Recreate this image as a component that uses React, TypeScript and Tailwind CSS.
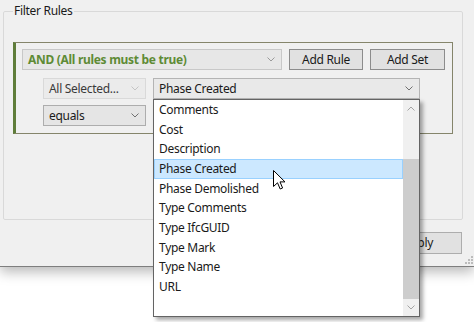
import React from 'react'

const items = [
  'Comments',
  'Cost',
  'Description',
  'Phase Created',
  'Phase Demolished',
  'Type Comments',
  'Type IfcGUID',
  'Type Mark',
  'Type Name',
  'URL',
]

function Chevron({ up = false, color = '#606060' }: { up?: boolean; color?: string }) {
  return (
    <svg width="8" height="5" viewBox="0 0 8 5" fill="none" aria-hidden>
      <polyline
        points={up ? '0.5,4.5 4,1 7.5,4.5' : '0.5,0.5 4,4 7.5,0.5'}
        stroke={color}
        strokeWidth="1"
      />
    </svg>
  )
}

export default function App() {
  return (
    <div
      className="relative w-[474px] h-[322px] overflow-hidden bg-white text-[12px] tracking-[-0.3px] text-[#1a1a1a]"
      style={{ fontFamily: '"Noto Sans", "Open Sans", sans-serif' }}
    >
      {/* Dialog window */}
      <div className="h-[267px] bg-[#f0f0f0] border-b border-[#7e7e7e] shadow-[0_5px_12px_rgba(0,0,0,0.28)] flex flex-col px-[3px] pt-[4px]">
        <fieldset className="w-[460px] h-[216px] border border-[#d9d9d9] rounded-[2px] px-[8px]">
          <legend className="ml-[1px] px-[1px] leading-[14px]">Filter Rules</legend>

          {/* Rule set */}
          <div className="mt-[24px] ml-[1px] w-[440px] h-[92px] border border-[#85856b] border-l-[3px] border-l-[#5f7d3a] flex flex-col pl-[6px] pt-[6px]">
            <div className="flex gap-[7px]">
              <div className="w-[260px] h-[21px] bg-[#e7e7e7] border border-[#c8c8c8] flex items-center justify-between pl-[5px] pr-[6px]">
                <span className="font-bold text-[#5e8b35]">AND (All rules must be true)</span>
                <Chevron color="#9a9a9a" />
              </div>
              <button className="w-[74px] h-[21px] bg-[#e1e1e1] border border-[#8c8c8c] flex items-center justify-center">
                Add Rule
              </button>
              <button className="w-[75px] h-[21px] bg-[#e1e1e1] border border-[#8c8c8c] flex items-center justify-center">
                Add Set
              </button>
            </div>

            <div className="flex gap-[7px] mt-[8px] pl-[21px]">
              <div className="w-[103px] h-[21px] bg-[#ebebeb] border border-[#d9d9d9] flex items-center justify-between pl-[5px] pr-[6px] text-[#3a3a3a]">
                <span>All Selected...</span>
                <Chevron color="#c4c4c4" />
              </div>
              <div className="relative z-10">
                <div className="w-[267px] h-[21px] bg-[#e9e9e9] border border-[#b4b4b4] flex items-center justify-between pl-[5px] pr-[6px]">
                  <span>Phase Created</span>
                  <Chevron color="#707070" />
                </div>

                {/* Open list */}
                <div className="absolute left-0 top-[21px] w-[267px] h-[218px] bg-white border border-[#646464] shadow-[3px_3px_4px_rgba(0,0,0,0.35)] flex">
                  <ul className="flex-1 flex flex-col">
                    {items.map((it) => (
                      <li
                        key={it}
                        className={
                          it === 'Phase Created'
                            ? 'h-[19.7px] flex items-center pl-[4px] bg-[#cce8ff] border border-[#99d1ff]'
                            : 'h-[19.7px] flex items-center pl-[5px]'
                        }
                      >
                        {it}
                      </li>
                    ))}
                  </ul>
                  <div className="w-[16px] flex flex-col bg-[#f0f0f0]">
                    <div className="h-[17px] flex items-center justify-center">
                      <Chevron up color="#a3a3a3" />
                    </div>
                    <div className="flex-1 flex flex-col">
                      <div className="h-[42px]" />
                      <div className="flex-1 bg-[#cdcdcd]" />
                    </div>
                    <div className="h-[17px] flex items-center justify-center">
                      <Chevron color="#a3a3a3" />
                    </div>
                  </div>
                </div>
              </div>
            </div>

            <div className="flex mt-[6px] pl-[21px]">
              <div className="w-[103px] h-[21px] bg-[#e5e5e5] border border-[#adadad] flex items-center justify-between pl-[5px] pr-[6px]">
                <span>equals</span>
                <Chevron color="#707070" />
              </div>
            </div>
          </div>
        </fieldset>

        <div className="flex justify-end pr-[9px] mt-[12px]">
          <button className="w-[88px] h-[22px] bg-[#e1e1e1] border border-[#adadad] flex items-center justify-center">
            Apply
          </button>
        </div>
      </div>

      {/* Size grip */}
      <svg className="absolute left-[465px] top-[256px]" width="8" height="8" viewBox="0 0 8 8" aria-hidden>
        <rect x="6" y="0" width="2" height="2" fill="#bcbcbc" />
        <rect x="3" y="3" width="2" height="2" fill="#bcbcbc" />
        <rect x="6" y="3" width="2" height="2" fill="#bcbcbc" />
        <rect x="0" y="6" width="2" height="2" fill="#bcbcbc" />
        <rect x="3" y="6" width="2" height="2" fill="#bcbcbc" />
        <rect x="6" y="6" width="2" height="2" fill="#bcbcbc" />
      </svg>

      {/* Mouse cursor */}
      <svg className="absolute left-[273px] top-[170px] z-20" width="13" height="21" viewBox="0 0 13 21" aria-hidden>
        <path
          d="M0.5 0.5 L0.5 16.5 L4.5 12.8 L7.2 19 L9.6 18 L7 11.9 L12 11.9 Z"
          fill="white"
          stroke="black"
          strokeWidth="1"
          strokeLinejoin="round"
        />
      </svg>
    </div>
  )
}
